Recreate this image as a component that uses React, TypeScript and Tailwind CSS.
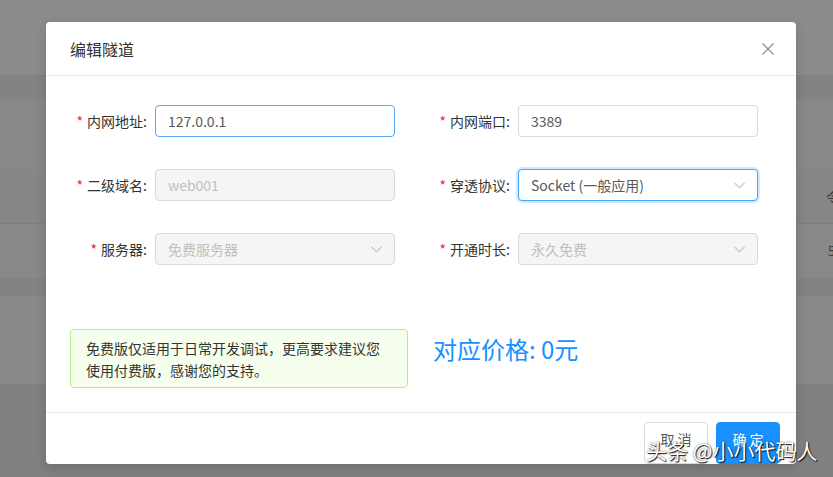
import React from "react";

const font = {
  fontFamily: '"Noto Sans CJK SC", "Open Sans", "Liberation Sans", sans-serif',
};

const Chevron = () => (
  <svg width="11" height="7" viewBox="0 0 11 7" className="shrink-0">
    <path d="M0.5 0.8 L5.5 5.8 L10.5 0.8" fill="none" stroke="#bfbfbf" strokeWidth="1.1" />
  </svg>
);

type FieldProps = {
  label: string;
  value: string;
  kind?: "focus" | "ring" | "disabled" | "normal";
  select?: boolean;
};

const Field: React.FC<FieldProps> = ({ label, value, kind = "normal", select }) => {
  const box =
    kind === "focus"
      ? "border-[#5aa7f2] bg-white text-[#595959]"
      : kind === "ring"
        ? "border-[#40a9ff] bg-white text-[#595959] shadow-[0_0_0_2px_rgba(24,144,255,0.2)]"
        : kind === "disabled"
          ? "border-[#d9d9d9] bg-[#f5f5f5] text-[#bfbfbf]"
          : "border-[#d9d9d9] bg-white text-[#595959]";
  return (
    <div className="flex items-center">
      <div className="w-[77px] flex justify-end items-center text-[14px] leading-[22px] text-[#333] whitespace-nowrap">
        <span className="text-[#f5222d] mr-[4px] text-[14px]">*</span>
        {label}:
      </div>
      <div
        className={`ml-[8px] w-[240px] h-[32px] rounded-[4px] border flex items-center justify-between pl-[12px] pr-[12px] text-[14px] ${box}`}
      >
        <span>{value}</span>
        {select && <Chevron />}
      </div>
    </div>
  );
};

export default function App() {
  return (
    <div className="relative w-[833px] h-[477px] overflow-hidden" style={font}>
      {/* 背景页面 (遮罩) */}
      <div className="flex flex-col">
        <div className="h-[75px] bg-[#8b8b8b]" />
        <div className="h-[24px] bg-[#838383]" />
        <div className="h-[71px] bg-[#888888]" />
        <div className="h-[54px] bg-[#868686] flex items-center pl-[826px] text-[13px] text-[#3d3d3d] border-b border-[#7e7e7e]">
          令
        </div>
        <div className="h-[54px] bg-[#888888] flex items-center pl-[828px] text-[13px] text-[#3d3d3d]">
          5
        </div>
        <div className="h-[18px] bg-[#838383]" />
        <div className="h-[88px] bg-[#898989]" />
        <div className="h-[93px] bg-[#808080]" />
      </div>

      {/* 弹窗 */}
      <div className="absolute left-[46px] top-[22px] w-[750px] h-[442px] bg-white rounded-[4px] overflow-hidden flex flex-col shadow-[0_4px_12px_rgba(0,0,0,0.15)]">
        <div className="h-[54px] shrink-0 px-6 flex items-center justify-between border-b border-[#e8e8e8]">
          <span className="text-[16px] leading-[22px] text-[#333]">编辑隧道</span>
          <svg width="12" height="12" viewBox="0 0 12 12" className="-mr-[2px]">
            <path d="M0.5 0.5 L11.5 11.5 M11.5 0.5 L0.5 11.5" stroke="#8c8c8c" strokeWidth="1.2" />
          </svg>
        </div>

        <div className="flex-1 px-6 pt-[29px]">
          <div className="grid grid-cols-[363px_1fr] gap-y-[32px]">
            <Field label="内网地址" value="127.0.0.1" kind="focus" />
            <Field label="内网端口" value="3389" />
            <Field label="二级域名" value="web001" kind="disabled" />
            <Field label="穿透协议" value="Socket (一般应用)" kind="ring" select />
            <Field label="服务器" value="免费服务器" kind="disabled" select />
            <Field label="开通时长" value="永久免费" kind="disabled" select />
          </div>

          <div className="mt-[64px] flex items-start">
            <div className="w-[338px] h-[59px] rounded-[4px] border border-[#b7eb8f] bg-[#f6ffed] px-[15px] pt-[7px] text-[14px] leading-[22px] text-[#333]">
              免费版仅适用于日常开发调试，更高要求建议您使用付费版，感谢您的支持。
            </div>
            <div className="ml-[25px] mt-[4px] text-[24px] leading-[32px] text-[#1890ff]">
              对应价格: 0元
            </div>
          </div>
        </div>

        <div className="h-[52px] shrink-0 border-t border-[#e8e8e8] pt-[9px] pr-4 flex justify-end gap-2">
          <button className="w-[64px] h-[42px] rounded-[4px] border border-[#d9d9d9] bg-white text-[14px] leading-[22px] text-[#595959] flex justify-center pt-[5px]">
            取 消
          </button>
          <button className="w-[64px] h-[42px] rounded-[4px] border border-[#1890ff] bg-[#1890ff] text-[14px] leading-[22px] text-white flex justify-center pt-[5px]">
            确 定
          </button>
        </div>
      </div>

      {/* 水印 */}
      <div className="absolute left-[646px] top-[435px] text-[21px] leading-[30px] text-white whitespace-nowrap [text-shadow:1px_1px_1px_rgba(0,0,0,0.9),0_0_2px_rgba(0,0,0,0.6)]">
        头条 @小小代码人
      </div>
    </div>
  );
}
